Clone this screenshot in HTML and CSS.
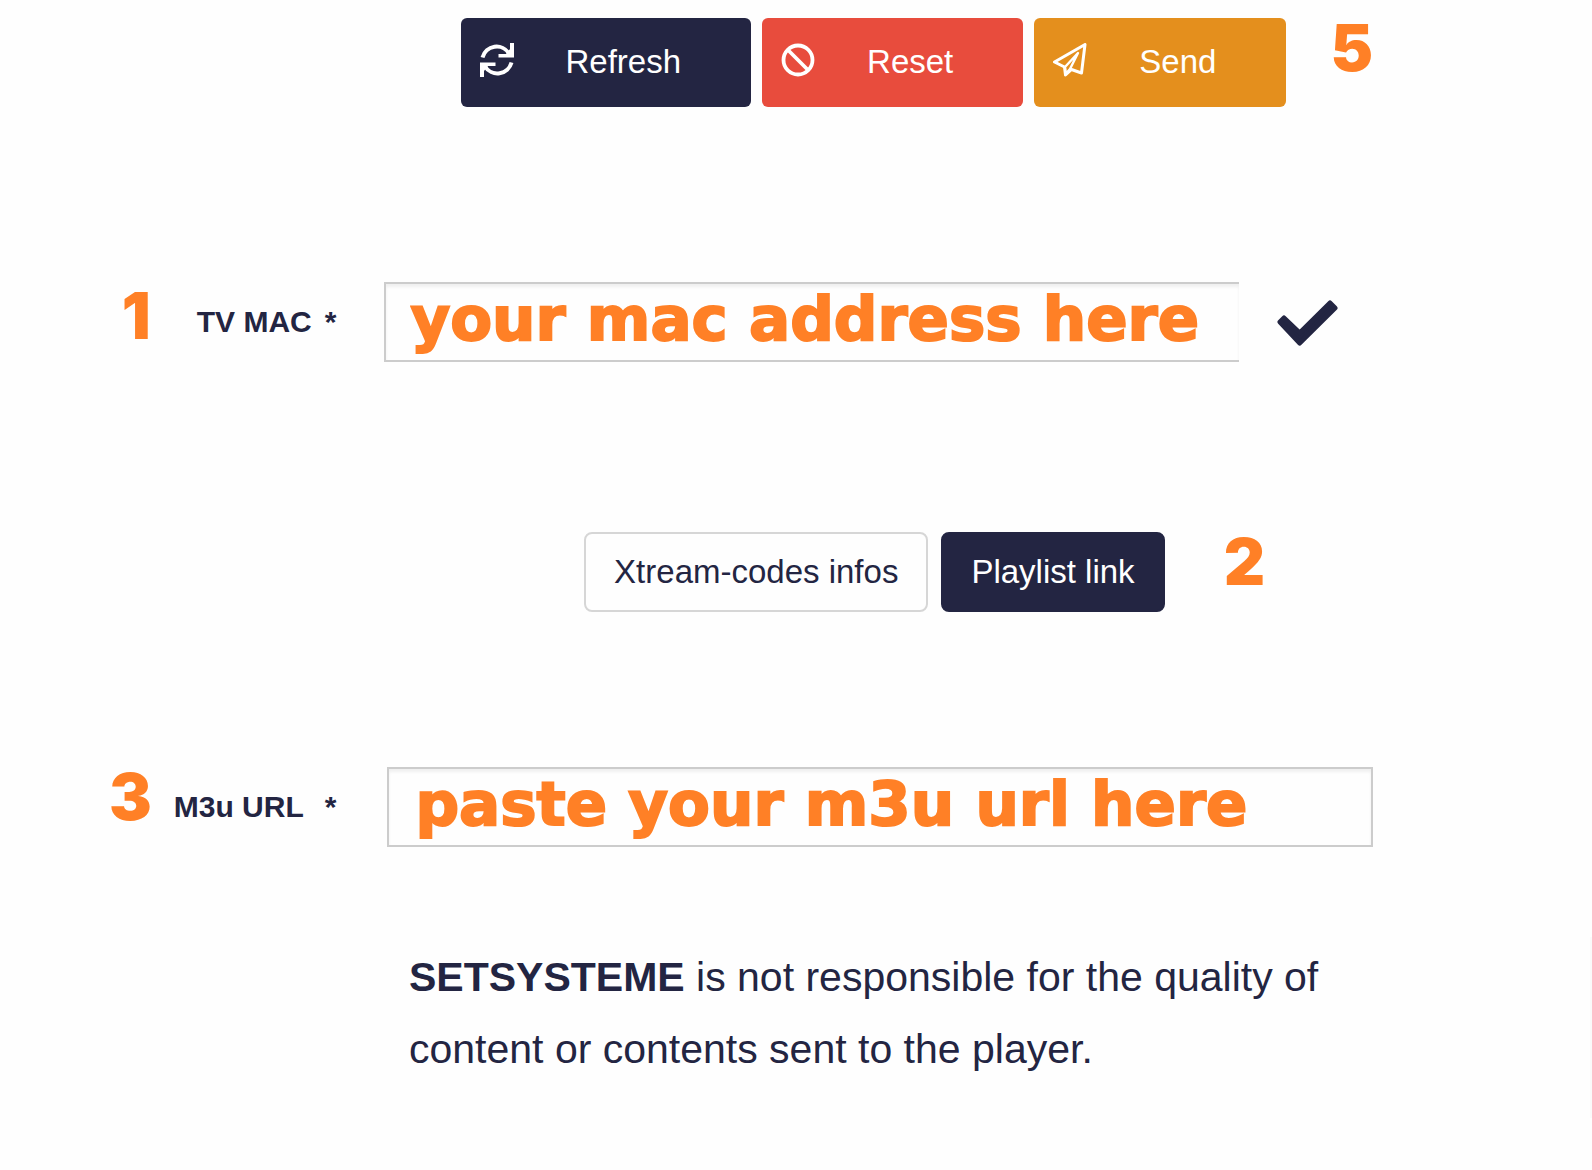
FILE: index.html
```html
<!DOCTYPE html>
<html lang="en">
<head>
  <meta charset="utf-8">
  <title>Playlist upload</title>
  <link rel="stylesheet" href="styles.css">
</head>
<body>
  <form class="page">
    <div class="toolbar">
      <button class="action action-refresh" type="button">
        <svg class="icon" viewBox="0 0 34 34" aria-hidden="true">
          <path d="M2.5 14.5A14.6 14.6 0 0 1 29 10.500M31.500 19.500A14.600 14.600 0 0 1 5 23.500" fill="none" stroke="currentColor" stroke-width="4"/>
          <path d="M34 0V14.500H18.500V11H26L30 6V0ZM0 34V19.500H15.500V23H8L4 28V34Z" fill="currentColor"/>
        </svg>
        Refresh
      </button>
      <button class="action action-reset" type="reset">
        <svg class="icon" viewBox="0 0 34 34" aria-hidden="true">
          <circle cx="17" cy="17" r="14.500" fill="none" stroke="currentColor" stroke-width="3.800"/>
          <path d="M7 7L27 27" stroke="currentColor" stroke-width="3.800"/>
        </svg>
        Reset
      </button>
      <button class="action action-send" type="button">
        <svg class="icon" viewBox="0 0 34 34" aria-hidden="true">
          <path d="M32 1.500L28.500 30L18.500 26.500L12.500 32L11.500 24L1.500 19Z" fill="none" stroke="currentColor" stroke-width="3" stroke-linejoin="round"/>
          <path d="M25 10L12 24L12.500 31L17 26Z" fill="none" stroke="currentColor" stroke-width="2.400" stroke-linejoin="round"/>
        </svg>
        Send
      </button>
      <span class="step step-send">5</span>
    </div>

    <div class="field-row mac-row">
      <div class="lead lead-mac">
        <span class="step">1</span>
        <label class="label label-mac" for="mac"><span>TV MAC</span><span>*</span></label>
      </div>
      <input class="field field-mac" id="mac" type="text" value="your mac address here">
      <svg class="check" viewBox="0 0 61 46" aria-hidden="true">
        <path d="M3 22L7 18L22.700 33L53 3L58 8L22.700 43Z" fill="currentColor" stroke="currentColor" stroke-width="5" stroke-linejoin="round"/>
      </svg>
    </div>

    <div class="modes">
      <button class="mode" type="button">Xtream-codes infos</button>
      <button class="mode mode-active" type="button">Playlist link</button>
      <span class="step step-mode">2</span>
    </div>

    <div class="field-row url-row">
      <div class="lead lead-url">
        <span class="step">3</span>
        <label class="label label-url" for="url"><span>M3u URL</span><span>*</span></label>
      </div>
      <input class="field field-url" id="url" type="text" value="paste your m3u url here">
    </div>

    <div class="notice">
      <p class="notice-text"><strong>SETSYSTEME</strong> is not responsible for the quality of content or contents sent to the player.</p>
    </div>
  </form>
</body>
</html>
```

FILE: styles.css
```css
* {
  box-sizing: border-box;
}

body {
  margin: 0;
  background: #fefefe;
  color: #232542;
  font-family: "Liberation Sans", Arial, sans-serif;
}

button,
input {
  font-family: inherit;
}

.page {
  padding-top: 18px;
}

.toolbar,
.field-row {
  display: flex;
  padding-right: 219px;
}

.toolbar {
  justify-content: flex-end;
  gap: 11px;
}

.action {
  display: flex;
  align-items: center;
  gap: 52px;
  height: 89px;
  padding: 0 70px 2px 19px;
  border: 0;
  border-radius: 6px;
  color: #fff;
  font-size: 33px;
  line-height: 40px;
}

.action-refresh {
  background: #232542;
}

.action-reset {
  background: #e84c3d;
}

.action-send {
  background: #e48f1d;
}

.icon {
  width: 34px;
  height: 34px;
  margin-bottom: 4px;
}

.step {
  color: #ff8026;
  font-family: Inter, "Arial Black", sans-serif;
  font-size: 64px;
  font-weight: 900;
  line-height: 60px;
}

.step-send {
  margin-left: 33px;
}

.mac-row {
  margin-top: 175px;
}

.mac-row .step {
  line-height: 68px;
}

.lead {
  display: flex;
  justify-content: flex-end;
  width: 28%;
  padding-right: 48px;
}

.lead-mac {
  gap: 46px;
}

.lead-url {
  gap: 22px;
}

.label {
  display: flex;
  font-size: 30px;
  font-weight: 700;
  line-height: 80px;
}

.label-mac {
  gap: 13px;
}

.label-url {
  gap: 21px;
}

.field {
  flex: 1;
  min-width: 0;
  height: 80px;
  border: 2px solid #ccc;
  background: #fefefe;
  box-shadow: inset 0 3px 3px #f0f0f0;
  color: #ff8026;
  font-family: "DejaVu Sans", "Arial Black", sans-serif;
  font-size: 61px;
  font-weight: 700;
  -webkit-text-stroke: 2px #ff8026;
}

.field-mac {
  padding: 0 0 8px 24px;
  border-right: 0;
}

.field-url {
  padding: 0 0 8px 26px;
}

.check {
  align-self: center;
  width: 61px;
  height: 46px;
  margin: 2px 35px 0 38px;
}

.modes {
  display: flex;
  justify-content: flex-end;
  gap: 13px;
  margin-top: 170px;
  padding-right: 327px;
}

.mode {
  height: 80px;
  padding: 0 28px;
  border: 2px solid #d6d6d6;
  border-radius: 8px;
  background: #fefefe;
  color: #232542;
  font-size: 33px;
  line-height: 40px;
}

.mode-active {
  border-color: #232542;
  background: #232542;
  color: #fff;
}

.step-mode {
  margin-left: 46px;
}

.url-row {
  gap: 3px;
  margin-top: 155px;
}

.notice {
  margin-top: 90px;
  padding: 4px 219px 33px 409px;
  border-right: 2px solid #fafafa;
}

.notice-text {
  margin: 0;
  font-size: 41px;
  line-height: 72px;
}
```
